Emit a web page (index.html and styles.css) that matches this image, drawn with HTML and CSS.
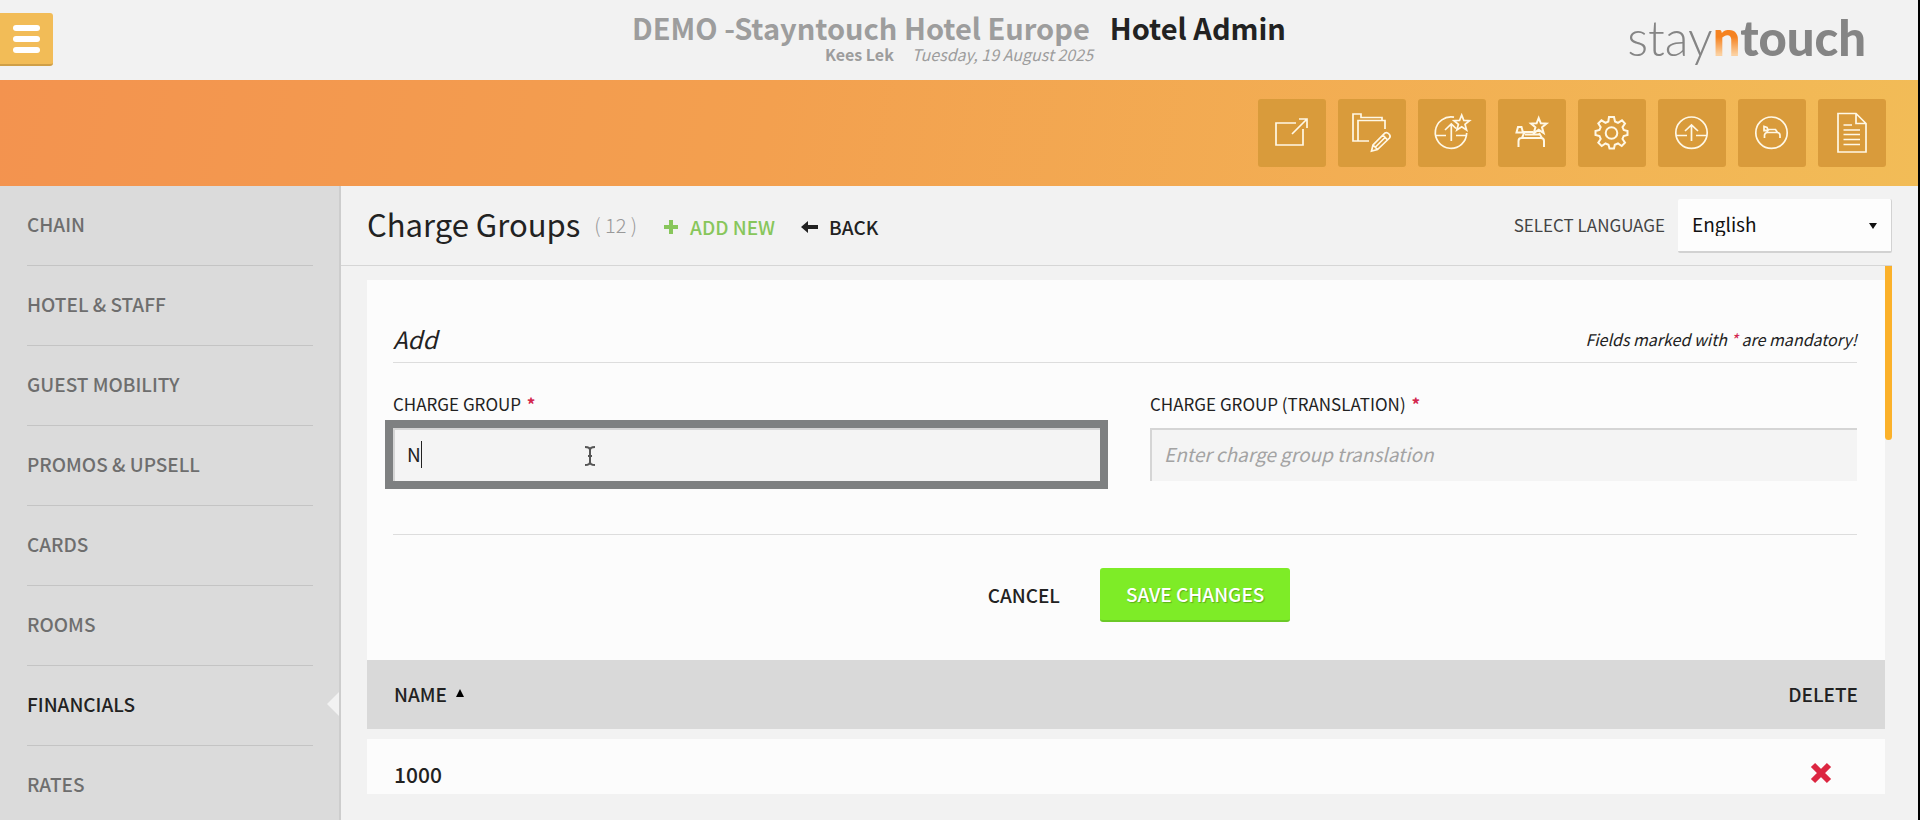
FILE: index.html
```html
<!DOCTYPE html>
<html lang="en">
<head>
<meta charset="utf-8">
<title>Charge Groups - Hotel Admin</title>
<link rel="stylesheet" href="styles.css">
</head>
<body>
<div class="page">
  <header class="topbar">
    <button class="menu-button" type="button" aria-label="Menu"><span class="bar"></span><span class="bar"></span><span class="bar"></span></button>
    <div class="heading">
      <h1 class="hotel"><span class="hotel-name">DEMO -Stayntouch Hotel Europe</span><span>Hotel Admin</span></h1>
      <p class="user"><strong>Kees Lek</strong><em>Tuesday, 19 August 2025</em></p>
    </div>
    <div class="logo"><span class="logo-light">stay</span><span class="logo-n">n</span><span class="logo-bold">touch</span></div>
  </header>

  <nav class="toolbar" aria-label="Shortcuts">
    <button class="tool" type="button" aria-label="Open"><svg viewBox="0 0 68 68"><path d="M38 24H18V46H45V30M34 35L49 20M41 20H49V29"/></svg></button>
    <button class="tool" type="button" aria-label="Edit folder"><svg viewBox="0 0 68 68"><path d="M31 42H15V15H23V18.500H44V21M20 42V21.500H47V30M33.500 52L35 46L47 34Q49 33 51 35Q53 37 51.500 39L39.500 50.500ZM35 46L39.500 50.500M45 36L49.500 41M37.500 48L47 38.500"/></svg></button>
    <button class="tool" type="button" aria-label="Favourite upgrade"><svg viewBox="0 0 68 68"><path d="M36 18.200A15.700 15.700 0 1 0 48.700 34M18 36.500H28M38 36.500H49M33.300 42V25M27 31L33.300 25L38 29.500M43.700 16L45.800 21.400L51.500 21.700L47 25.300L48.600 31L43.700 27.800L38.800 31L40.400 25.300L36 21.700L41.600 21.400Z"/></svg></button>
    <button class="tool" type="button" aria-label="Favourite room"><svg class="heavy" viewBox="0 0 68 68"><path d="M20.500 48V42Q20.500 39 23.500 39H43Q46 39 46 42V48M24 39L26.500 33H35M41 34L44 39M18.500 33.500L20 28H23.500L25 33.500ZM27 35.500H42M40.700 19L42.800 24.300L48.500 24.600L44 28.300L45.600 34L40.700 30.800L35.800 34L37.400 28.300L33 24.600L38.600 24.300Z"/></svg></button>
    <button class="tool" type="button" aria-label="Settings"><svg class="heavy" viewBox="0 0 68 68"><path d="M31 18H36L37 22.500L40 23.800L44 21.300L47 24.500L44.500 28.200L45.700 31L49.500 32V36L45.700 37L44.500 40L47 43.700L43.700 47L40 44.500L36.800 45.800L36 49.500H31.500L30.500 45.800L27.500 44.500L23.700 47L20.300 43.700L22.700 40L21.500 37L17.500 36V32L21.500 31L22.700 28.200L20.300 24.500L23.500 21.300L27.500 23.800L30.300 22.500Z"/><circle cx="33.500" cy="34" r="5.800"/></svg></button>
    <button class="tool" type="button" aria-label="Upgrade"><svg viewBox="0 0 68 68"><circle cx="33.500" cy="33.700" r="15.700"/><path d="M18 36.500H29M38 36.500H49M33.500 42V26M27 32L33.500 26L40 32"/></svg></button>
    <button class="tool" type="button" aria-label="Rooms"><svg viewBox="0 0 68 68"><circle cx="33.500" cy="33.700" r="15.700"/><path d="M26.500 39V36Q27 33.500 29.500 33.500H39Q42 33.500 42 36.500V39M29 33.500L30 30.500H37.500L39.500 33.500M26 31.500V27.500L29 28.500L30 31Z"/></svg></button>
    <button class="tool" type="button" aria-label="Reports"><svg viewBox="0 0 68 68"><path d="M38 14.500H20V53H48V24.500ZM38 14.500V24.500H48M25.500 26H34M25.500 31H42M25.500 35.500H42M25.500 40.500H42M25.500 45.500H42"/></svg></button>
  </nav>

  <div class="body">
    <nav class="sidebar" aria-label="Settings sections">
      <a class="side-link" href="#chain">CHAIN</a>
      <a class="side-link" href="#hotel">HOTEL &amp; STAFF</a>
      <a class="side-link" href="#guest">GUEST MOBILITY</a>
      <a class="side-link" href="#promos">PROMOS &amp; UPSELL</a>
      <a class="side-link" href="#cards">CARDS</a>
      <a class="side-link" href="#rooms">ROOMS</a>
      <a class="side-link active" href="#financials" aria-current="page">FINANCIALS</a>
      <a class="side-link" href="#rates">RATES</a>
    </nav>

    <main class="main">
      <div class="main-head">
        <h2 class="title">Charge Groups</h2>
        <span class="count">( 12 )</span>
        <button class="action add" type="button"><svg class="plus" viewBox="0 0 16 16"><path d="M8 1V15M1 8H15"/></svg>ADD NEW</button>
        <button class="action" type="button"><svg class="arrow" viewBox="0 0 17 12"><path d="M0 6L7 0V4H17V8H7V12Z"/></svg>BACK</button>
        <label class="lang-label" for="lang">SELECT LANGUAGE</label>
        <span class="select-wrap"><select class="lang" id="lang"><option>English</option></select></span>
      </div>

      <div class="scroller">
        <div class="scroll-content">
          <form class="form">
            <div class="form-head">
              <h3 class="form-title">Add</h3>
              <p class="note">Fields marked with <span class="req">*</span> are mandatory!</p>
            </div>
            <div class="fields">
              <div class="field">
                <label for="group">CHARGE GROUP <strong class="req">*</strong></label>
                <div class="input-wrap">
                  <input class="input focused" id="group" type="text" value="N">
                  <span class="caret"></span>
                  <svg class="pointer" viewBox="0 0 10 20"><path d="M0 1Q5 1 5 4Q5 1 10 1M5 4V16M3 10H7M0 19Q5 19 5 16Q5 19 10 19"/></svg>
                </div>
              </div>
              <div class="field">
                <label for="translation">CHARGE GROUP (TRANSLATION) <strong class="req">*</strong></label>
                <div class="input-wrap"><input class="input" id="translation" type="text" placeholder="Enter charge group translation"></div>
              </div>
            </div>
            <div class="buttons">
              <button class="cancel" type="button">CANCEL</button>
              <button class="save" type="button">SAVE CHANGES</button>
            </div>
          </form>
          <table class="table">
            <thead>
              <tr><th>NAME <svg class="sort" viewBox="0 0 8 8"><path d="M4 0L8 8H0Z"/></svg></th><th class="right">DELETE</th></tr>
            </thead>
            <tbody>
              <tr class="spacer"><td colspan="2"></td></tr>
              <tr class="row"><td>1000</td><td class="right"><button class="delete" type="button" aria-label="Delete 1000"><svg viewBox="0 0 22 22"><path d="M3 3L19 19M19 3L3 19"/></svg></button></td></tr>
            </tbody>
          </table>
        </div>
        <div class="thumb"></div>
      </div>
    </main>
  </div>
</div>
</body>
</html>
```
FILE: styles.css
```css
* { box-sizing: border-box; }

body {
  margin: 0;
  background: #f2f2f2;
  color: #222;
  font-family: "Noto Sans CJK SC", "Noto Sans", sans-serif;
  font-size: 19px;
  line-height: 24px;
}

h1, h2, h3, p { margin: 0; font-weight: 400; }
button, input, select { font: inherit; color: inherit; }
button { padding: 0; border: 0; background: none; }
svg { display: block; fill: none; stroke: currentColor; }

.page {
  display: flex;
  flex-direction: column;
  height: 100vh;
  overflow: hidden;
  border-right: 2px solid #000;
}

.topbar {
  display: grid;
  grid-template-columns: 1fr auto 1fr;
  flex: none;
  height: 80px;
}

.menu-button {
  display: flex;
  flex-direction: column;
  align-items: center;
  justify-content: center;
  gap: 5px;
  width: 53px;
  height: 53px;
  margin-top: 13px;
  background: #f2bc57;
  border-bottom: 2px solid #cf9f47;
  border-radius: 0 3px 3px 0;
}
.bar { width: 27px; height: 6px; border-radius: 3px; background: #fff; }

.heading { padding-top: 10px; text-align: center; }
.hotel {
  display: flex;
  gap: 20px;
  font-size: 29px;
  font-weight: 700;
  line-height: 34px;
}
.hotel-name { color: #9d9d9d; }
.user {
  display: flex;
  justify-content: center;
  gap: 18px;
  color: #9d9d9d;
  font-size: 16px;
  line-height: 20px;
}

.logo {
  justify-self: end;
  padding-right: 52px;
  color: #858585;
  font-family: Lato, sans-serif;
  font-size: 49px;
  line-height: 74px;
}
.logo-light { font-weight: 300; }
.logo-bold, .logo-n { font-weight: 900; }
.logo-n {
  background: linear-gradient(#f58220 50%, #fbd0a0 80%);
  background-clip: text;
  color: transparent;
}

.toolbar {
  display: flex;
  align-items: center;
  justify-content: flex-end;
  gap: 12px;
  flex: none;
  height: 106px;
  padding-right: 32px;
  background: linear-gradient(100deg, #f3934f, #f3a04f 40%, #f2bc57);
}
.tool {
  width: 68px;
  height: 68px;
  border-radius: 3px;
  background: #d99b3b;
  color: #fff8e6;
}
.tool svg { stroke-width: 1.7; }
.tool .heavy { stroke-width: 2; }

.body { display: flex; flex: 1; min-height: 0; }

.sidebar {
  flex: none;
  width: 341px;
  padding: 0 26px 0 27px;
  overflow: hidden;
  background: #dbdbdb;
  border-right: 2px solid #cdcdcd;
  position: relative;
}
.side-link {
  display: flex;
  align-items: center;
  height: 80px;
  padding-bottom: 3px;
  border-bottom: 1px solid #c4c4c4;
  color: #6e6e6e;
  font-weight: 500;
  text-decoration: none;
}
.active { color: #222; }
.active::after {
  content: "";
  position: absolute;
  right: -2px;
  width: 14px;
  height: 28px;
  background: #f2f2f2;
  clip-path: polygon(100% 0, 0 50%, 100% 100%);
}

.main {
  display: flex;
  flex-direction: column;
  flex: 1;
  min-width: 0;
  padding: 0 26px 26px 0;
}
.main-head {
  display: flex;
  align-items: center;
  flex: none;
  height: 80px;
  padding-left: 26px;
  border-bottom: 1px solid #d6d6d6;
}
.title { padding-bottom: 4px; font-size: 31px; line-height: 40px; }
.count { margin-left: 14px; padding-bottom: 2px; color: #999; font-size: 20px; font-weight: 300; }
.action {
  display: flex;
  align-items: center;
  gap: 11px;
  margin-left: 26px;
  padding-top: 2px;
  font-weight: 500;
}
.add { color: #88c65b; }
.plus { width: 16px; stroke-width: 4; }
.arrow { width: 17px; fill: currentColor; stroke: none; }
.lang-label { margin-left: auto; padding-bottom: 2px; font-size: 17px; color: #444; }
.select-wrap { position: relative; margin-left: 13px; }
.select-wrap::after {
  content: "";
  position: absolute;
  right: 15px;
  top: 24px;
  border: 4px solid transparent;
  border-top: 6px solid #111;
  border-bottom: 0;
}
.lang {
  display: block;
  appearance: none;
  width: 214px;
  height: 54px;
  padding: 0 14px 2px;
  border: 0;
  border-right: 1px solid #d2d2d2;
  border-bottom: 2px solid #d2d2d2;
  border-radius: 2px;
  background: #fdfdfd;
  color: #111;
}

.scroller { display: flex; flex: 1; min-height: 0; overflow: hidden; }
.scroll-content { flex: 1; padding: 14px 0 0 26px; }
.thumb {
  flex: none;
  width: 7px;
  height: 174px;
  background: #fbb12a;
  border-radius: 0 0 4px 4px;
}

.form { height: 380px; padding: 42px 28px 0 26px; background: #fcfcfc; }
.form-head {
  display: flex;
  align-items: center;
  justify-content: space-between;
  height: 41px;
  padding-bottom: 6px;
  border-bottom: 1px solid #ddd;
  font-style: italic;
}
.form-title { font-size: 24px; line-height: 32px; }
.note { font-size: 16px; }
.req { color: #d3264d; }
.fields {
  display: grid;
  grid-template-columns: 1fr 1fr;
  gap: 50px;
  height: 172px;
  padding-top: 29px;
  border-bottom: 1px solid #ddd;
}
.field label { display: block; margin-bottom: 12px; font-size: 17px; }
.field .req { margin-left: 2px; }
.input-wrap { position: relative; }
.input {
  display: block;
  width: 100%;
  height: 53px;
  padding: 0 12px 4px;
  border: 0 solid #d5d5d5;
  border-width: 2px 0 0 2px;
  border-radius: 0;
  background: #f4f4f4;
}
.input::placeholder { color: #a3a3a3; font-style: italic; opacity: 1; }
.focused { outline: 8px solid #7e8081; }
.caret {
  position: absolute;
  left: 28px;
  top: 13px;
  width: 1px;
  height: 27px;
  background: #222;
}
.pointer {
  position: absolute;
  left: 192px;
  top: 18px;
  width: 10px;
  height: 20px;
  stroke-width: 2;
  color: #555;
}

.buttons {
  display: flex;
  align-items: center;
  justify-content: center;
  gap: 40px;
  padding: 33px 0 0 28px;
  font-weight: 500;
}
.save {
  height: 54px;
  padding: 0 26px;
  border-bottom: 2px solid #6bc927;
  border-radius: 3px;
  background: #7eec27;
  color: #fff;
  text-shadow: 1px 1px 1px #5cae1c;
}

.table { width: 100%; border-collapse: collapse; font-weight: 500; }
.table th {
  height: 69px;
  padding: 0 27px 2px;
  background: #d9d9d9;
  font-weight: 500;
  text-align: left;
}
.table .right { text-align: right; }
.sort { display: inline-block; width: 8px; margin: 0 0 5px 5px; fill: #000; stroke: none; }
.spacer td { height: 10px; padding: 0; }
.row td { height: 70px; padding: 0 27px; background: #fcfcfc; font-size: 21px; }
.delete { width: 22px; margin-right: 26px; color: #dc2641; }
.delete svg { stroke-width: 6; }
```
